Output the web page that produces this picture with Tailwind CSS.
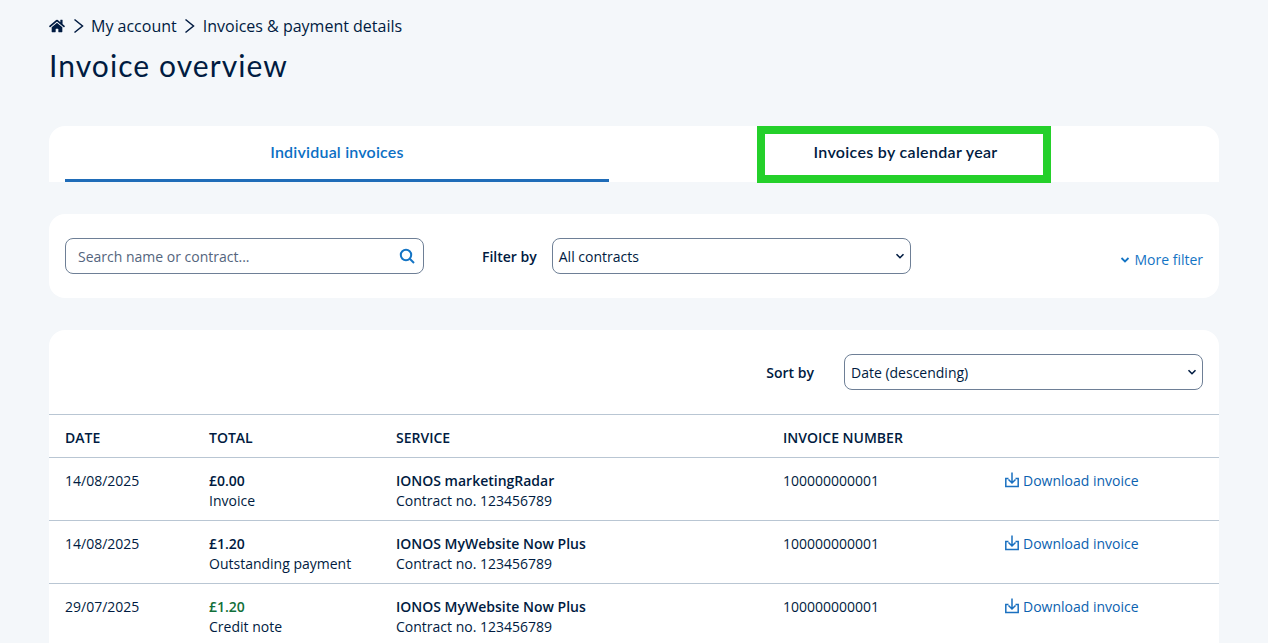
<!doctype html>
<html>
  <head>
    <meta charset="UTF-8" />
    <meta name="viewport" content="width=device-width, initial-scale=1.0" />
    <script src="https://cdn.jsdelivr.net/npm/@tailwindcss/browser@4"></script>
  </head>
  <body class="h-[643px] overflow-hidden bg-[#f4f7fa] font-['Open_Sans',sans-serif] text-[#001b41] text-sm">
    <main class="px-[49px]">

      <!-- breadcrumb -->
      <nav class="flex items-center h-5 mt-4 text-base leading-5">
        <svg class="w-4 h-4 mr-[8px]" viewBox="0 0 576 512" fill="#001b41">
          <path d="M280.4 148.3 96 300.1V464a16 16 0 0 0 16 16l112-.3a16 16 0 0 0 16-16V368a16 16 0 0 1 16-16h64a16 16 0 0 1 16 16v95.600a16 16 0 0 0 16 16.100l112 .3a16 16 0 0 0 16-16V300L295.700 148.300a12.200 12.200 0 0 0-15.300 0zM571.600 251.500 488 182.600V44a12 12 0 0 0-12-12h-56a12 12 0 0 0-12 12v72.600L318.500 43a48 48 0 0 0-61 0L4.300 251.500a12 12 0 0 0-1.600 16.900l25.500 31A12 12 0 0 0 45.200 301l235.200-193.700a12.200 12.200 0 0 1 15.300 0L530.900 301a12 12 0 0 0 16.900-1.600l25.500-31a12 12 0 0 0-1.700-16.900z"/>
        </svg>
        <svg class="w-3 h-4 mr-[6px]" viewBox="0 0 12 16" fill="none" stroke="#001b41" stroke-width="1.500"><path d="M1.500 1.500 9.500 8l-8 6.500"/></svg>
        <span>My account</span>
        <svg class="w-3 h-4 ml-[7px] mr-[7px]" viewBox="0 0 12 16" fill="none" stroke="#001b41" stroke-width="1.500"><path d="M1.500 1.500 9.500 8l-8 6.500"/></svg>
        <span>Invoices &amp; payment details</span>
      </nav>
      <h1 class="mt-2 h-[42px] font-['Lato',sans-serif] text-[30px] leading-[42px] tracking-[1.07px]">Invoice overview</h1>

      <!-- tabs -->
      <div class="flex mt-10 h-14 bg-white rounded-t-2xl pl-4">
        <div class="w-[544px] h-14 flex items-center justify-center pb-[2px] border-b-[3px] border-[#1f6cb8] text-[#0b6fc4] font-['Lato',sans-serif] font-semibold text-base tracking-[0.2px]">Individual invoices</div>
        <div class="ml-[148px] w-[294px] h-[57px] flex items-center justify-center pb-[5px] pl-[3px] border-8 border-[#24d02a] font-['Lato',sans-serif] font-semibold text-base tracking-[0.32px]">Invoices by calendar year</div>
      </div>

      <!-- filter -->
      <section class="mt-8 h-[84px] bg-white rounded-2xl px-4 pt-6 flex items-start">
        <div class="w-[359px] h-9 border border-[#6e7f96] rounded-lg flex items-center justify-between pl-3 pr-2 text-[#54657d]">
          <span class="pt-0.5">Search name or contract...</span>
          <svg class="w-4 h-4" viewBox="0 0 16 16" fill="none" stroke="#1474c4" stroke-width="2"><circle cx="7" cy="7" r="5.200"/><path d="m11 11 4 4"/></svg>
        </div>
        <span class="ml-[58px] mr-[15px] h-9 pt-px leading-9 font-semibold">Filter by</span>
        <div class="w-[359px] h-9 border border-[#6e7f96] rounded-lg flex items-center justify-between pl-1.5 pr-[5px]">
          <span class="pt-0.5">All contracts</span>
          <svg class="w-2.5 h-2.5" viewBox="0 0 10 10" fill="none" stroke="#001b41" stroke-width="1.600"><path d="m1.500 3.300 3.500 3.400 3.500-3.400"/></svg>
        </div>
        <div class="ml-auto mt-3 flex items-center gap-1 text-[#1474c4] leading-5">
          <svg class="w-2.5 h-2.5" viewBox="0 0 10 10" fill="none" stroke="#1474c4" stroke-width="1.800"><path d="m1.500 3 3.500 3.500L8.500 3"/></svg>
          <span>More filter</span>
        </div>
      </section>

      <!-- invoices -->
      <section class="mt-8 bg-white rounded-t-2xl">
        <div class="h-[85px] px-4 pb-px flex items-center justify-end border-b border-[#b9c6d3]">
          <span class="mr-[30px] pt-0.5 font-semibold">Sort by</span>
          <div class="w-[359px] h-9 border border-[#6e7f96] rounded-lg flex items-center justify-between pl-1.5 pr-[5px]">
            <span class="pt-0.5">Date (descending)</span>
            <svg class="w-2.5 h-2.5" viewBox="0 0 10 10" fill="none" stroke="#001b41" stroke-width="1.600"><path d="m1.500 3.300 3.500 3.400 3.500-3.400"/></svg>
          </div>
        </div>

        <div class="grid grid-cols-[144px_187px_387px_221px_1fr] px-4 h-[43px] pt-[3px] items-center border-b border-[#b9c6d3] font-semibold">
          <span>DATE</span><span>TOTAL</span><span>SERVICE</span><span>INVOICE NUMBER</span><span></span>
        </div>

        <div class="grid grid-cols-[144px_187px_387px_221px_1fr] px-4 h-[63px] pt-[13px] leading-5 border-b border-[#b9c6d3]">
          <span>14/08/2025</span>
          <div><b class="block font-semibold">£0.00</b>Invoice</div>
          <div><b class="block font-semibold">IONOS marketingRadar</b>Contract no. 123456789</div>
          <span>100000000001</span>
          <div class="flex items-start gap-[3px] text-[#0b62b0]">
            <svg class="w-4 h-4 mt-[1px]" viewBox="0 0 16 16" fill="none" stroke="#1a70c0" stroke-width="1.500"><path d="M8 .5v10.500M4.500 7.500 8 11l3.500-3.500M4.500 6.500H1.800v8h12.400v-8h-2.700"/></svg>
            <span>Download invoice</span>
          </div>
        </div>

        <div class="grid grid-cols-[144px_187px_387px_221px_1fr] px-4 h-[63px] pt-[13px] leading-5 border-b border-[#b9c6d3]">
          <span>14/08/2025</span>
          <div><b class="block font-semibold">£1.20</b>Outstanding payment</div>
          <div><b class="block font-semibold">IONOS MyWebsite Now Plus</b>Contract no. 123456789</div>
          <span>100000000001</span>
          <div class="flex items-start gap-[3px] text-[#0b62b0]">
            <svg class="w-4 h-4 mt-[1px]" viewBox="0 0 16 16" fill="none" stroke="#1a70c0" stroke-width="1.500"><path d="M8 .5v10.500M4.500 7.500 8 11l3.500-3.500M4.500 6.500H1.800v8h12.400v-8h-2.700"/></svg>
            <span>Download invoice</span>
          </div>
        </div>

        <div class="grid grid-cols-[144px_187px_387px_221px_1fr] px-4 h-[63px] pt-[13px] leading-5">
          <span>29/07/2025</span>
          <div><b class="block font-semibold text-[#12703a]">£1.20</b>Credit note</div>
          <div><b class="block font-semibold">IONOS MyWebsite Now Plus</b>Contract no. 123456789</div>
          <span>100000000001</span>
          <div class="flex items-start gap-[3px] text-[#0b62b0]">
            <svg class="w-4 h-4 mt-[1px]" viewBox="0 0 16 16" fill="none" stroke="#1a70c0" stroke-width="1.500"><path d="M8 .5v10.500M4.500 7.500 8 11l3.500-3.500M4.500 6.500H1.800v8h12.400v-8h-2.700"/></svg>
            <span>Download invoice</span>
          </div>
        </div>
      </section>
    </main>
  </body>
</html>
